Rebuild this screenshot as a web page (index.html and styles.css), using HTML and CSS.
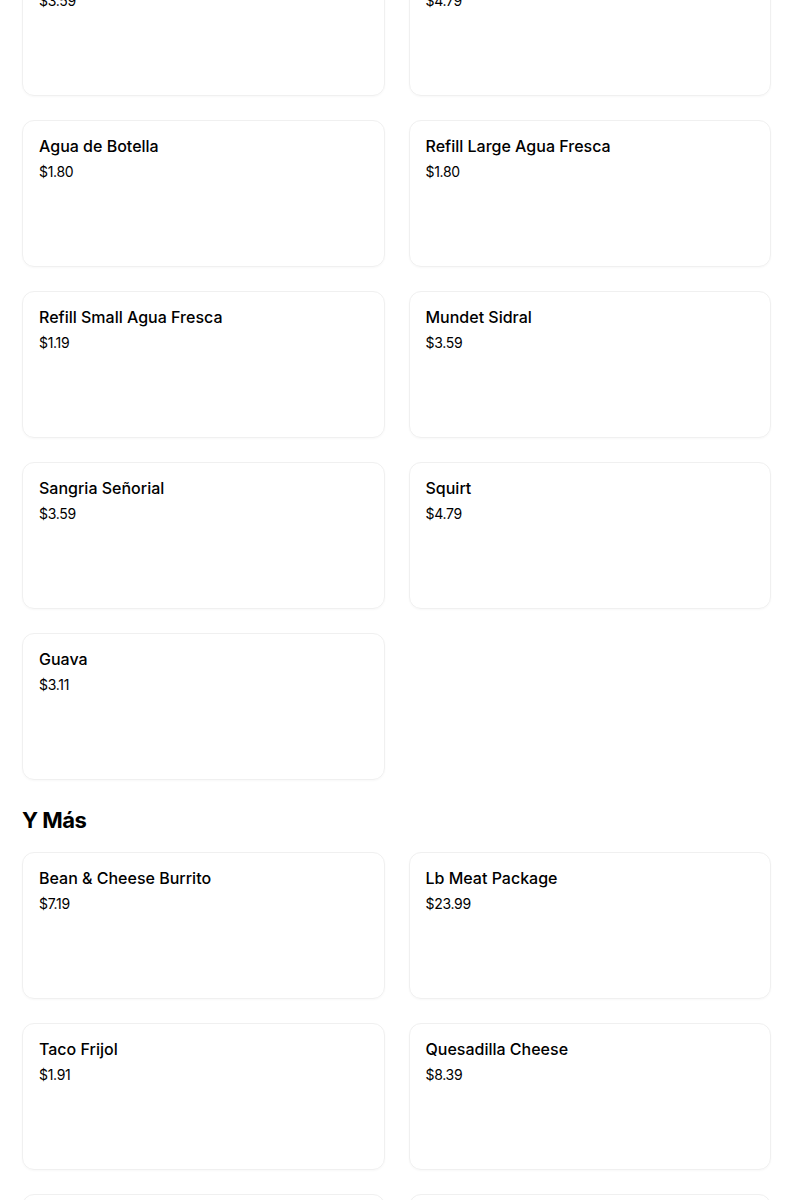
FILE: index.html
```html
<!DOCTYPE html>
<html lang="es">
<head>
<meta charset="utf-8">
<title>Menu</title>
<link rel="stylesheet" href="styles.css">
</head>
<body>
<main class="menu">
  <section class="section section-first">
    <div class="grid">
      <div class="card"><div class="name">Jarritos</div><div class="price">$3.59</div></div>
      <div class="card"><div class="name">Coca Cola</div><div class="price">$4.79</div></div>
      <div class="card"><div class="name">Agua de Botella</div><div class="price">$1.80</div></div>
      <div class="card"><div class="name">Refill Large Agua Fresca</div><div class="price">$1.80</div></div>
      <div class="card"><div class="name">Refill Small Agua Fresca</div><div class="price">$1.19</div></div>
      <div class="card"><div class="name">Mundet Sidral</div><div class="price">$3.59</div></div>
      <div class="card"><div class="name">Sangria Señorial</div><div class="price">$3.59</div></div>
      <div class="card"><div class="name">Squirt</div><div class="price">$4.79</div></div>
      <div class="card"><div class="name">Guava</div><div class="price">$3.11</div></div>
    </div>
  </section>
  <section class="section">
    <h2 class="section-title">Y Más</h2>
    <div class="grid">
      <div class="card"><div class="name">Bean &amp; Cheese Burrito</div><div class="price">$7.19</div></div>
      <div class="card"><div class="name">Lb Meat Package</div><div class="price">$23.99</div></div>
      <div class="card"><div class="name">Taco Frijol</div><div class="price">$1.91</div></div>
      <div class="card"><div class="name">Quesadilla Cheese</div><div class="price">$8.39</div></div>
      <div class="card"><div class="name">Torta</div><div class="price">$9.59</div></div>
      <div class="card"><div class="name">Tostada</div><div class="price">$3.59</div></div>
    </div>
  </section>
</main>
</body>
</html>
```
FILE: styles.css
```css
html, body {
  margin: 0;
  padding: 0;
  background: #ffffff;
}
body {
  font-family: Inter, "Noto Sans", "Liberation Sans", sans-serif;
  color: #000000;
  overflow: hidden;
}
.menu {
  padding: 0 33px 0 22px;
  margin-top: -51px;
}
.section-first {
  margin-bottom: 26px;
}
.section-title {
  margin: 0 0 18px;
  font-size: 22px;
  line-height: 28px;
  font-weight: 700;
  letter-spacing: -0.5px;
}
.grid {
  display: grid;
  grid-template-columns: 1fr 1fr;
  column-gap: 24px;
  row-gap: 24px;
}
.card {
  box-sizing: border-box;
  height: 147px;
  border: 1px solid #f0f0f0;
  border-radius: 12px;
  padding: 13px 16px;
  box-shadow: 0 1px 2px rgba(0, 0, 0, 0.03);
}
.name {
  font-size: 16px;
  line-height: 24px;
  font-weight: 500;
}
.price {
  margin-top: 4px;
  font-size: 14px;
  line-height: 20px;
  font-weight: 400;
  letter-spacing: -0.3px;
}
```
